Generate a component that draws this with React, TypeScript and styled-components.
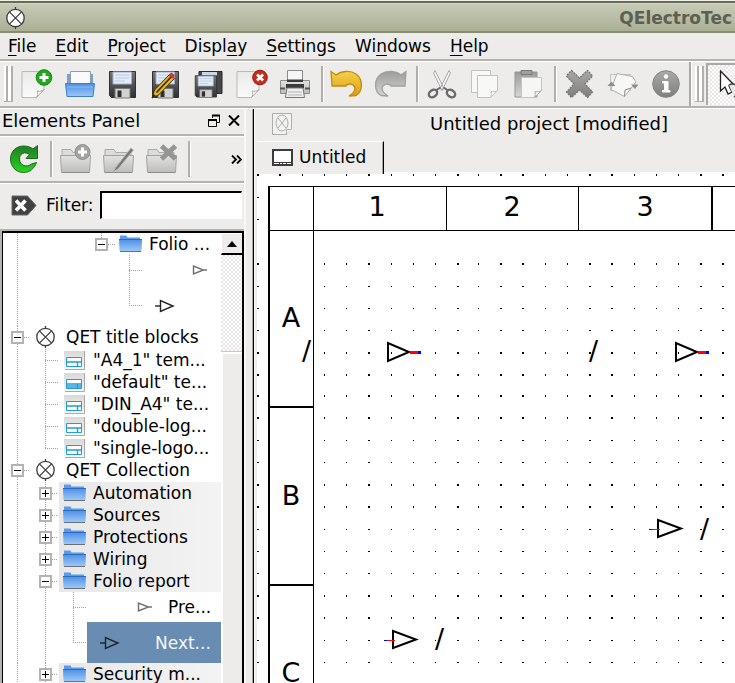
import React from "react";
import styled, { createGlobalStyle, css } from "styled-components";

const face = "#edecea";
const shade = "#b4b3b0";

const GlobalStyle = createGlobalStyle`
  * { box-sizing: border-box; }
  html, body, #root { height: 100%; }
  body {
    margin: 0;
    overflow: hidden;
    background: ${face};
    color: #000;
    font: 17px/22px "DejaVu Sans", sans-serif;
  }
  button {
    margin: 0;
    padding: 0;
    border: 0;
    background: none;
    color: inherit;
    font: inherit;
  }
  svg { display: block; flex: none; }
`;

const Window = styled.div`
  display: flex;
  flex-direction: column;
  height: 100vh;
  overflow: hidden;
`;

const TitleBar = styled.header`
  display: flex;
  flex: none;
  align-items: center;
  justify-content: space-between;
  height: 32px;
  margin-top: 1px;
  padding: 2px 3px 0 5px;
  border-top: 2px solid #666d53;
  border-bottom: 2px solid #858c72;
  box-shadow: inset 0 1px #d3d7c4;
  background: linear-gradient(#c8ccb8, #aab094);
`;

const WindowTitle = styled.h1`
  margin: 0;
  color: #5c6052;
  font-size: 17px;
  font-weight: bold;
  white-space: nowrap;
`;

const MenuBar = styled.nav`
  display: flex;
  flex: none;
  align-items: center;
  gap: 19px;
  height: 28px;
  padding: 0 8px;
  border-bottom: 2px solid ${shade};
`;

const MenuButton = styled.button`
  text-underline-offset: 3px;
  u { text-decoration-thickness: 1px; }
`;

const ToolBar = styled.div`
  display: flex;
  flex: none;
  height: 47px;
  padding-left: 4px;
  overflow: hidden;
  border-top: 1px solid #fff;
  border-bottom: 2px solid ${shade};
`;

const Handle = styled.span`
  flex: none;
  width: 9px;
  height: 36px;
  margin: 4px 2px 0 0;
  border: solid #b0afac;
  border-width: 0 2px 1px 0;
  background: linear-gradient(90deg, #fff 0 2px, #b0afac 2px 4px, #fff 4px 7px);
`;

const ToolButton = styled.button`
  display: flex;
  flex: none;
  align-items: center;
  justify-content: center;
  width: 43px;
  height: 44px;
`;

const ToggleButton = styled(ToolButton)`
  justify-content: flex-start;
  width: 44px;
  height: 42px;
  margin-top: 1px;
  padding-left: 11px;
  border: solid #a9a8a5;
  border-width: 2px 0 0 2px;
  background: repeating-conic-gradient(#fff 0 25%, #e9e8e6 0 50%) 0 0 / 4px 4px;
`;

const Separator = styled.span`
  flex: none;
  width: 9px;
  height: 36px;
  margin-top: 4px;
  background: linear-gradient(90deg, transparent 5px, #b0afac 5px 7px, #fff 7px 8px, transparent 8px);
`;

const BarEdge = styled.span`
  flex: none;
  width: 3px;
  margin: 0 3px 0 2px;
  background: linear-gradient(90deg, #a9a8a5 2px, #fff 2px);
`;

const Workspace = styled.main`
  display: flex;
  flex: 1;
  min-height: 0;
  border-top: 1px solid #fff;
`;

const Dock = styled.aside`
  display: flex;
  flex: none;
  flex-direction: column;
  width: 246px;
  border-right: 2px solid #f8f8f7;
`;

const DockTitle = styled.div`
  display: flex;
  flex: none;
  align-items: center;
  height: 27px;
  padding: 0 0 2px 2px;
  border-bottom: 2px solid ${shade};
  h2 {
    flex: 1;
    margin: 0;
    font-size: 18px;
    font-weight: normal;
  }
`;

const TitleButton = styled.button`
  display: flex;
  justify-content: center;
  width: 20px;
`;

const DockBar = styled.div`
  display: flex;
  flex: none;
  height: 47px;
  padding-left: 2px;
  border-top: 1px solid #fff;
  border-bottom: 2px solid ${shade};
`;

const MoreButton = styled(ToolButton)`
  width: 16px;
  margin: 0 0 0 auto;
`;

const FilterBar = styled.div`
  display: flex;
  flex: none;
  align-items: center;
  height: 48px;
  padding: 0 2px 3px 11px;
  border-top: 1px solid #fff;
  border-bottom: 2px solid ${shade};
  label { margin: 0 6px 0 9px; }
  input {
    flex: 1;
    min-width: 0;
    height: 28px;
    border: solid;
    border-width: 2px 1px 1px 2px;
    border-color: #000 #fff #fff #000;
    outline: 0;
    background: #fff;
    font: inherit;
  }
`;

const TreeFrame = styled.div`
  display: flex;
  flex: 1;
  min-height: 0;
  margin-left: 2px;
  border: solid #000;
  border-width: 2px 2px 0 1px;
  background: #fff;
  box-shadow: -2px 0 ${shade};
`;

const Tree = styled.div`
  flex: 1;
  min-width: 0;
  overflow: hidden;
  ul {
    margin: 0;
    padding: 1px 0 0;
    list-style: none;
  }
`;

const Row = styled.div<{ $height: number }>`
  display: flex;
  height: ${(p) => p.$height}px;
`;

const RowBody = styled.div<{ $look?: "category" | "selected"; $indent?: number }>`
  display: flex;
  flex: 1;
  align-items: center;
  min-width: 0;
  padding-left: ${(p) => p.$indent ?? 4}px;
  white-space: nowrap;
  overflow: hidden;
  ${(p) => p.$look === "category" && css`background: linear-gradient(90deg, #e8e8e8, #f3f3f3);`}
  ${(p) => p.$look === "selected" && css`background: #688cb2; color: #f4f7fb;`}
`;

const RowText = styled.span<{ $gap?: number }>`
  margin-left: ${(p) => p.$gap ?? 8}px;
`;

const dotsV = "repeating-linear-gradient(#a0a0a0 0 1px, transparent 1px 2px)";
const dotsH = "repeating-linear-gradient(90deg, #a0a0a0 0 1px, transparent 1px 2px)";

type Guide = "none" | "line" | "tee" | "end" | "node" | "start";
const guideArt: Record<Guide, string> = {
  none: "none",
  line: `${dotsV} 14px 0 / 1px 100% no-repeat`,
  node: `${dotsV} 14px 0 / 1px 100% no-repeat, ${dotsH} 21px 50% / 5px 1px no-repeat`,
  tee: `${dotsV} 14px 0 / 1px 100% no-repeat, ${dotsH} 14px 50% / 14px 1px no-repeat`,
  end: `${dotsV} 14px 0 / 1px 50% no-repeat, ${dotsH} 14px 50% / 14px 1px no-repeat`,
  start: `${dotsV} 14px 0 / 1px 50% no-repeat, ${dotsH} 21px 50% / 7px 1px no-repeat`,
};

const GuideCell = styled.span<{ $kind: Guide }>`
  display: flex;
  flex: none;
  align-items: center;
  justify-content: center;
  width: 28px;
  background: ${(p) => guideArt[p.$kind]};
`;

const Expander = styled.button`
  display: flex;
  align-items: center;
  justify-content: center;
  width: 13px;
  height: 13px;
  border: 2px solid #b2b2b2;
  background: #fff;
`;

const ScrollBar = styled.div`
  display: flex;
  flex: none;
  flex-direction: column;
  width: 21px;
  background: repeating-conic-gradient(#fff 0 25%, #e6e5e3 0 50%) 0 0 / 4px 4px;
`;

const ScrollUp = styled.button`
  display: flex;
  align-items: center;
  justify-content: center;
  height: 22px;
  border: solid;
  border-width: 1px 0 2px 1px;
  border-color: #fff #000 #000 #fff;
  background: ${face};
`;

const ScrollThumb = styled.div`
  flex: 1;
  margin-top: 97px;
  border: solid #fff;
  border-width: 2px 0 0 2px;
  background: ${face};
  box-shadow: 0 -1px #c9c8c5;
`;

const Splitter = styled.div`
  flex: none;
  width: 8px;
  border-right: 1px solid #000;
  box-shadow: inset -1px 0 #a8a7a4;
`;

const Editor = styled.section`
  display: flex;
  flex: 1;
  flex-direction: column;
  min-width: 0;
  padding-left: 2px;
  border-left: 1px solid #f8f8f7;
`;

const ProjectTitle = styled.div`
  display: flex;
  flex: none;
  align-items: center;
  height: 32px;
  padding: 0 15px 3px;
  overflow: hidden;
  white-space: nowrap;
  h2 {
    margin: 0 0 0 137px;
    font-size: 18px;
    font-weight: normal;
  }
`;

const Tabs = styled.div`
  display: flex;
  flex: none;
  height: 33px;
  &::after {
    content: "";
    flex: 1;
    border-bottom: 2px solid #fbfbfb;
  }
`;

const Tab = styled.button`
  display: flex;
  align-items: center;
  gap: 6px;
  width: 127px;
  padding: 0 0 2px 15px;
  border: solid;
  border-width: 1px 1px 0 0;
  border-color: #fff #000;
  box-shadow: inset -1px 0 #a8a7a4;
`;

const Canvas = styled.div`
  flex: 1;
  min-height: 0;
  overflow: hidden;
  background: #fff;
`;

/* ---------- icons ---------- */

const LampIcon = ({ bg = "none" }: { bg?: string }) => (
  <svg width="21" height="22" viewBox="0 0 21 22" fill={bg} stroke="#3c3c3c" strokeWidth="1.3">
    <circle cx="10.5" cy="11" r="8.7" />
    <path d="M4.4 4.9l12.2 12.2M16.6 4.9L4.4 17.1M10.5 0v2.5M10.5 19.5V22" />
  </svg>
);

const Sheet = ({ children }: { children?: React.ReactNode }) => (
  <svg width="32" height="30" viewBox="0 0 32 30">
    <path d="M1 2.5h22v18l-7.500 8H1z" fill="url(#paper)" stroke="#b9b9b8" />
    <path d="M15.500 28.500c1.500-2 1.500-4 .8-6.500 2.500.6 5 .3 6.700-1.500z" fill="#fff" stroke="#aaa" />
    {children}
  </svg>
);

const NewIcon = () => (
  <Sheet>
    <circle cx="23" cy="8.500" r="7.800" fill="#20a91c" stroke="#138a10" />
    <path d="M23 4v9M18.500 8.500h9" stroke="#fff" strokeWidth="3" />
  </Sheet>
);

const CloseDocIcon = () => (
  <Sheet>
    <circle cx="24" cy="8.500" r="7.300" fill="#c92a1b" stroke="#93180e" />
    <path d="M21 5.500l6 6M27 5.500l-6 6" stroke="#fff" strokeWidth="2.800" />
  </Sheet>
);

const OpenIcon = () => (
  <svg width="32" height="30" viewBox="0 0 32 30">
    <path d="M3 5h5v10H3zM24 5h5v10h-5z" fill="#6ea3e3" />
    <path d="M6.500 14V2.500h20V14" fill="#fafafa" stroke="#9a9a9a" />
    <path d="M1.500 14.500h29l-1.500 13h-26z" fill="url(#blue)" stroke="#3b7fd0" />
    <path d="M3 18h26" stroke="#8fbcf2" />
  </svg>
);

const Floppy = () => (
  <>
    <path d="M1.500 1.500h26v26h-24l-2-2z" fill="url(#floppy)" stroke="#303034" />
    <path d="M5 2h18.500v12H5z" fill="#e4edf7" stroke="#9fb0c4" />
    <path d="M7 5h14.500M7 8h14.500M7 11h10" stroke="#b5cbe4" />
    <path d="M7 18.500h15V28H7z" fill="#d2d2d2" stroke="#777" />
    <path d="M9.500 20.500h4V27h-4z" fill="#303034" />
  </>
);

const SaveIcon = () => (
  <svg width="29" height="29" viewBox="0 0 29 29"><Floppy /></svg>
);

const SaveAsIcon = () => (
  <svg width="29" height="29" viewBox="0 0 29 29">
    <Floppy />
    <path d="M1 28l2.500-8L18.500 4.500l5 4L7.500 25z" fill="#e9b51c" stroke="#3d3008" />
    <path d="M5.500 22.500L20.500 6.500" stroke="#2b2614" strokeWidth="1.600" />
    <path d="M17.500 5.500l2-2.500c1-.8 4.500 1.500 4 3.200l-2 2.600z" fill="#d8323a" />
    <path d="M1 28l1.500-4 2.500 2z" fill="#222" />
  </svg>
);

const SaveAllIcon = () => (
  <svg width="29" height="29" viewBox="0 0 29 29">
    <path d="M5 1.500h23v22H5z" fill="#47474a" stroke="#29292b" />
    <path d="M8 2h15v4H8z" fill="#cad7e5" />
    <g transform="translate(0 4.500) scale(.82)"><Floppy /></g>
  </svg>
);

const PrintIcon = () => (
  <svg width="32" height="30" viewBox="0 0 32 30">
    <path d="M8.500 1.500h15V13h-15z" fill="#f6f6f6" stroke="#8b8b8b" />
    <path d="M1.500 11.500h29v13h-29z" fill="url(#silver)" stroke="#8c8c8c" />
    <path d="M8 10.500h16V13H8zM7 15h18v4H7z" fill="#3b3b3b" />
    <path d="M1 19.500h5M26 19.500h5" stroke="#555" strokeWidth="2" />
    <path d="M8 19h16l1.500 9.500h-19z" fill="#eee" stroke="#777" />
    <path d="M9 23h14M9 26h14" stroke="#b5b5b5" />
  </svg>
);

const arrowPath =
  "M1 1.500l5 3.500C11 1 20 0 26 4c8 6 6.500 18 0 21.500l-7 .5c6-3.500 7.500-8 4.500-10.500-3-2.300-6.500-1-7.500 0V16H2z";

const UndoIcon = () => (
  <svg width="34" height="28" viewBox="0 0 34 28">
    <path d={arrowPath} fill="url(#gold)" stroke="#c08d12" strokeWidth="1.300" />
  </svg>
);

const RedoIcon = () => (
  <svg width="34" height="28" viewBox="0 0 34 28">
    <path d={arrowPath} transform="matrix(-1 0 0 1 34 0)" fill="url(#grey)" stroke="#a0a09f" strokeWidth="1.300" />
  </svg>
);

const CutIcon = () => (
  <svg width="30" height="30" viewBox="0 0 30 30" fill="none">
    <path d="M8 1.500l9 18-2 2L6.500 4zM22 1.500l-9 18 2 2L23.500 4z" fill="#f4f4f4" stroke="#aaa" />
    <ellipse cx="6" cy="24.500" rx="4.500" ry="3.300" transform="rotate(-35 6 24.500)" stroke="#6a6a6a" strokeWidth="2.400" />
    <ellipse cx="24" cy="24.500" rx="4.500" ry="3.300" transform="rotate(35 24 24.500)" stroke="#6a6a6a" strokeWidth="2.400" />
    <path d="M9.500 21l4-2.500M20.500 21l-4-2.500" stroke="#6a6a6a" strokeWidth="2" />
  </svg>
);

const CopyIcon = () => (
  <svg width="30" height="30" viewBox="0 0 30 30" fill="#f8f8f7" stroke="#c1c1c0">
    <path d="M1.500 1.500h19v22h-19z" />
    <path d="M7.500 6.500h20v15l-7 7h-13z" />
    <path d="M20.500 28.500c1-2 1-4 .5-6 2 .5 5 .5 6.500-1z" fill="#fff" />
  </svg>
);

const PasteIcon = () => (
  <svg width="30" height="30" viewBox="0 0 30 30">
    <path d="M2 3h22v25H2z" fill="url(#grey)" stroke="#969696" />
    <path d="M8 1.500h11v4H8z" fill="#9f9f9f" stroke="#7b7b7b" />
    <path d="M8.500 8.500h20v13l-7 7h-13z" fill="#f6f6f5" stroke="#c4c4c3" />
    <path d="M21.500 28.500c1-2 1-4 .5-6 2 .5 5 .5 6.500-1z" fill="#fff" stroke="#aaa" />
  </svg>
);

const DeleteIcon = () => (
  <svg width="29" height="30" viewBox="0 0 29 30">
    <path
      d="M6.500 1.500L14.500 9l8-7.500L27.500 7l-7.500 8 7.500 8-5 5.500-8-7.500-8 7.500-5-5.500L9 15 1.500 7z"
      fill="url(#dark)" stroke="#777" strokeWidth="1.400" strokeDasharray="2 1" strokeLinejoin="round"
    />
  </svg>
);

const RotateIcon = () => (
  <svg width="32" height="30" viewBox="0 0 32 30" fill="#f0f0ef" stroke="#c2c2c1">
    <path d="M3.500 5.500h20v16h-20z" />
    <path d="M10 4.500l15.500 3L29 13 17.500 27.500 4 20.500z" fill="#f7f7f6" stroke="#b0b0af" />
    <path d="M17.500 27.500l.5-6.500 6-2" fill="none" stroke="#8f8f8e" />
    <path d="M.5 17l4-4.500 4 4.500zM24 15.500h7.500l-3.500 4.500z" fill="#8d8d8d" stroke="none" />
  </svg>
);

const InfoIcon = () => (
  <svg width="30" height="30" viewBox="0 0 30 30">
    <circle cx="15" cy="15" r="13.300" fill="url(#dark)" stroke="#858585" />
    <circle cx="15" cy="7.500" r="2.200" fill="#fff" />
    <path d="M11.500 12.500h5.500v9h2V23h-7.500v-1.500h2V14h-2z" fill="#fff" stroke="#fff" />
  </svg>
);

const PointerIcon = () => (
  <svg width="30" height="30" viewBox="0 0 30 30">
    <path d="M1.500 1v20l4.500-4 3 7 4-2-3-6h6z" fill="#fff" stroke="#222" strokeWidth="1.300" />
    <path d="M10 15c3-2 8-1 9 3s-1 7-4 9" fill="#e8e8e8" stroke="#444" strokeWidth="1.500" />
  </svg>
);

const RefreshIcon = () => (
  <svg width="30" height="30" viewBox="0 0 30 30">
    <path
      d="M28.500 1.500v13H17l3.500-4C16 7 10.500 9.500 10.500 15c0 6.500 7.500 9 12 5l5-1.500c-2 6-7 10-13 10C7 28.500 1.500 22.500 1.500 15S7 2 14.500 2c4 0 7 1 9.500 3z"
      fill="url(#green)" stroke="#1b6a20"
    />
  </svg>
);

const GreyFolder = ({ children }: { children: React.ReactNode }) => (
  <svg width="33" height="30" viewBox="0 0 33 30">
    <path d="M3 12V5.500h9l2 3h15V12" fill="#dcdcdb" stroke="#aaaaa9" />
    <path d="M1.500 11.500h30l-1 17h-28z" fill="url(#silver)" stroke="#a2a2a1" />
    <path d="M3 28.500h27" stroke="#8b8b8a" />
    {children}
  </svg>
);

const AddFolderIcon = () => (
  <GreyFolder>
    <circle cx="23.500" cy="8" r="7.500" fill="#a3a3a2" stroke="#8e8e8d" />
    <path d="M23.500 3.500v9M19 8h9" stroke="#fff" strokeWidth="3" />
  </GreyFolder>
);
const EditFolderIcon = () => (
  <GreyFolder><path d="M11 28l3-5L29 4l2.500 2L16 25z" fill="#777" stroke="#b8b8b7" /></GreyFolder>
);
const DeleteFolderIcon = () => (
  <GreyFolder>
    <path d="M16.500 2l14 13M30.500 2l-14 13" stroke="#959594" strokeWidth="5" />
  </GreyFolder>
);

const ClearIcon = () => (
  <svg width="26" height="21" viewBox="0 0 26 21">
    <path d="M1 1h15.500L25 10.500 16.500 20H1z" fill="#414141" stroke="#666" />
    <path d="M5 5.500l9.500 10M14.500 5.500L5 15.500" stroke="#fff" strokeWidth="3.600" />
  </svg>
);

const FolderIcon = () => (
  <svg width="23" height="18" viewBox="0 0 23 18">
    <path d="M1 5V.5h6.500l1 2H21V5z" fill="#5b9bea" />
    <path d="M0 4h23l-.5 12H.5z" fill="url(#blue)" />
    <path d="M0 4.500h23" stroke="#2c6cc0" />
    <path d="M1 16.500h21" stroke="#6b6f76" />
  </svg>
);

const TemplateIcon = ({ filled }: { filled?: boolean }) => (
  <svg width="22" height="19" viewBox="0 0 22 19">
    <path d="M0 0h20v18H0z" fill="url(#page)" />
    <path d="M20.500 0v18.500H1" fill="none" stroke="#a9a9a9" />
    <path d="M2.500 6.500h15v9h-15z" fill="#fff" stroke="#249bd3" />
    {filled && <path d="M3 12h14v3H3z" fill="#5fb5de" />}
    <path d="M3 11h15M13.500 11v4" stroke="#249bd3" strokeWidth="1.400" />
  </svg>
);

const PortIcon = ({ faint, lead }: { faint?: boolean; lead?: boolean }) => (
  <svg width="20" height="14" viewBox="0 0 20 14" fill="none" stroke={faint ? "#6e6e6e" : "#222"} strokeWidth="1.400">
    {faint ? <path d="M3.500 3v8l10-4zM12 7h5" /> : <path d="M5.500 1.500v11L18 7z" />}
    {lead && <path d="M0 7h6" />}
  </svg>
);

const ProjectIcon = () => (
  <svg width="21" height="22" viewBox="0 0 21 22" fill="#f3f3f2" stroke="#aeaeac">
    <path d="M.5.500h19v15l-5 6H.5z" />
    <ellipse cx="10" cy="10" rx="6" ry="8" />
    <path d="M6 5l8 10M14 5L6 15M14.500 21.500v-5h5" />
  </svg>
);

const FolioIcon = () => (
  <svg width="21" height="17" viewBox="0 0 21 17" fill="none" stroke="#3c3c3c">
    <path d="M1 1h19v15H1z" fill="#fff" strokeWidth="2" />
    <path d="M1 13.500h19M7.500 13v3M10.500 13v3M14.500 13v3" />
  </svg>
);

const Paints = () => (
  <svg width="0" height="0" aria-hidden="true">
    <defs>
      {[
        ["paper", "#e9e9e8", "#fbfbfb"],
        ["page", "#d9d9d9", "#f6f6f6"],
        ["blue", "#4c8fe4", "#9cc6f7"],
        ["floppy", "#77777a", "#303034"],
        ["silver", "#e2e2e1", "#bcbcbb"],
        ["gold", "#f6d04a", "#dd9c16"],
        ["grey", "#9c9c9b", "#d6d6d5"],
        ["dark", "#a9a9a8", "#7f7f7e"],
        ["green", "#1f7a26", "#2bd51f"],
      ].map(([id, from, to]) => (
        <linearGradient key={id} id={id} x1="0" y1="0" x2="0" y2="1">
          <stop offset="0" stopColor={from} />
          <stop offset="1" stopColor={to} />
        </linearGradient>
      ))}
    </defs>
  </svg>
);

/* ---------- tree ---------- */

type RowProps = {
  guides: Guide[];
  sign?: "+" | "-";
  height?: number;
  look?: "category" | "selected";
  indent?: number;
  gap?: number;
  icon: React.ReactNode;
  text?: string;
};

const TreeRow = ({ guides, sign, height = 22, look, indent, gap, icon, text }: RowProps) => (
  <Row $height={height} role="treeitem" aria-selected={look === "selected"}>
    {guides.map((g, i) => (
      <GuideCell key={i} $kind={g}>
        {sign && i === guides.length - 1 && (
          <Expander aria-label={sign === "+" ? "Expand" : "Collapse"}>
            <svg width="7" height="7" viewBox="0 0 7 7" stroke="#000">
              <path d={sign === "+" ? "M0 3.500h7M3.500 0v7" : "M0 3.500h7"} />
            </svg>
          </Expander>
        )}
      </GuideCell>
    ))}
    <RowBody $look={look} $indent={indent}>
      {icon}
      {text && <RowText $gap={gap}>{text}</RowText>}
    </RowBody>
  </Row>
);

const templates = ['"A4_1" tem...', '"default" te...', '"DIN_A4" te...', '"double-log...', '"single-logo...'];
const categories = ["Automation", "Sources", "Protections", "Wiring", "Folio report"];

/* ---------- diagram ---------- */

const extend = (list: number[], limit: number) => {
  const out = [...list];
  while (out[out.length - 1] < limit) out.push(out[out.length - 1] + 22);
  return out;
};

const columns = extend(
  [0, 22, 45, 67, 89, 111, 134, 156, 178, 200, 221, 243, 265, 288, 310, 332, 354, 377, 399, 421, 443, 465], 2000);
const lines = extend(
  [0, 23, 45, 89, 112, 134, 156, 178, 200, 221, 243, 266, 288, 310, 332, 355, 377, 399, 421, 443, 466, 488], 1400);
const wideColumns = new Set([0, 22, 111, 200, 243, 265, 332, 354, 443, 465]);
const tallLines = new Set([0, 89, 178, 200, 221, 243, 310, 332, 421, 443]);

const dots = lines
  .flatMap((y, r) =>
    columns
      .filter((_, c) => r === 0 || c === 0 || (c > 2 && r > 2))
      .map((x) => {
        const w = wideColumns.has(x) ? 2 : 1;
        return `M${x} ${y}h${w}v${tallLines.has(y) ? 2 : 1}h-${w}z`;
      })
  )
  .join("");

const Outgoing = ({ x, y }: { x: number; y: number }) => (
  <g transform={`translate(${x} ${y})`}>
    <path d="M1 1v18l21-9z" fill="none" stroke="#000" strokeWidth="2" />
    <path d="M23 9h8v3h-8z" fill="#f00" />
    <path d="M31 9h3v3h-3z" fill="#00f" />
  </g>
);

const Incoming = ({ x, y }: { x: number; y: number }) => (
  <g transform={`translate(${x} ${y})`}>
    <path d="M9 1v17l23-8.500z" fill="none" stroke="#000" strokeWidth="2" />
    <path d="M3 10.500h8" stroke="#f00" />
    <path d="M0 10.500h3" stroke="#00f" />
  </g>
);

const label = { fontFamily: '"DejaVu Sans", sans-serif', fontSize: 27 };

const Diagram = () => (
  <svg width="2000" height="1400" role="img" aria-label="Folio diagram">
    <path d={dots} shapeRendering="crispEdges" />
    <g shapeRendering="crispEdges">
      <path d="M11 12h1989v1H13v1387h-2z" />
      <path d="M13 56h1987v1H13zM56 13h1v1387h-1zM189 13h1v43h-1zM321 13h1v43h-1zM454 13h2v43h-2z" />
      <path d="M13 232h43v2H13zM13 410h43v2H13zM13 588h43v2H13z" />
    </g>
    <g {...label} textAnchor="middle">
      <text x="120" y="42">1</text>
      <text x="255" y="42">2</text>
      <text x="388" y="42">3</text>
      <text x="34" y="153">A</text>
      <text x="34" y="331">B</text>
      <text x="34" y="508">C</text>
    </g>
    <g {...label}>
      <text x="45" y="186">/</text>
      <text x="332" y="186">/</text>
      <text x="443" y="364">/</text>
      <text x="178" y="474">/</text>
    </g>
    <Outgoing x={130} y={168} />
    <Outgoing x={418} y={168} />
    <Incoming x={392} y={345} />
    <Incoming x={127} y={456} />
  </svg>
);

/* ---------- page ---------- */

const menus = [["", "F", "ile"], ["", "E", "dit"], ["", "P", "roject"], ["Displ", "a", "y"], ["", "S", "ettings"], ["Wi", "n", "dows"], ["", "H", "elp"]];

const tools: [string, () => React.ReactElement][][] = [
  [["New", NewIcon], ["Open", OpenIcon], ["Save", SaveIcon], ["Save as", SaveAsIcon], ["Save all", SaveAllIcon], ["Close", CloseDocIcon], ["Print", PrintIcon]],
  [["Undo", UndoIcon], ["Redo", RedoIcon]],
  [["Cut", CutIcon], ["Copy", CopyIcon], ["Paste", PasteIcon]],
  [["Delete", DeleteIcon], ["Rotate", RotateIcon], ["Properties", InfoIcon]],
];

export default function App() {
  return (
    <Window>
      <GlobalStyle />
      <Paints />
      <TitleBar>
        <LampIcon bg="#fff" />
        <WindowTitle>QElectroTec</WindowTitle>
      </TitleBar>
      <MenuBar>
        {menus.map(([before, key, after]) => (
          <MenuButton key={before + key + after}>{before}<u>{key}</u>{after}</MenuButton>
        ))}
      </MenuBar>
      <ToolBar role="toolbar">
        <Handle />
        {tools.map((group, i) => (
          <React.Fragment key={i}>
            {i > 0 && <Separator />}
            {group.map(([name, Icon]) => (
              <ToolButton key={name} aria-label={name}><Icon /></ToolButton>
            ))}
          </React.Fragment>
        ))}
        <BarEdge />
        <Handle />
        <ToggleButton aria-label="Selection" aria-pressed="true"><PointerIcon /></ToggleButton>
      </ToolBar>
      <Workspace>
        <Dock>
          <DockTitle>
            <h2>Elements Panel</h2>
            <TitleButton aria-label="Float">
              <svg width="12" height="13" viewBox="0 0 12 13" fill="none" stroke="#000">
                <path d="M4.500 4V1M11.500 1v7.500H9" />
                <path d="M4 1.500h8" strokeWidth="2" />
                <path d="M.5 5v7.500h8V5" />
                <path d="M0 6h9" strokeWidth="2" />
              </svg>
            </TitleButton>
            <TitleButton aria-label="Close panel">
              <svg width="12" height="11" viewBox="0 0 12 11" stroke="#000" strokeWidth="2">
                <path d="M1 .5l10 10M11 .5l-10 10" />
              </svg>
            </TitleButton>
          </DockTitle>
          <DockBar role="toolbar">
            <ToolButton aria-label="Reload"><RefreshIcon /></ToolButton>
            <Separator />
            <ToolButton aria-label="New category"><AddFolderIcon /></ToolButton>
            <ToolButton aria-label="Edit category"><EditFolderIcon /></ToolButton>
            <ToolButton aria-label="Delete category"><DeleteFolderIcon /></ToolButton>
            <Separator />
            <MoreButton aria-label="More">
              <svg width="11" height="9" viewBox="0 0 11 9" fill="none" stroke="#000" strokeWidth="1.800">
                <path d="M1 .5l4 4-4 4M6 .5l4 4-4 4" />
              </svg>
            </MoreButton>
          </DockBar>
          <FilterBar>
            <ClearIcon />
            <label htmlFor="filter">Filter:</label>
            <input id="filter" type="text" />
          </FilterBar>
          <TreeFrame>
            <Tree role="tree">
              <TreeRow guides={["line", "none", "none", "start"]} sign="-" icon={<FolderIcon />} gap={7} text="Folio ..." />
              <TreeRow guides={["line", "none", "none", "none", "tee"]} height={30} indent={47} icon={<PortIcon faint />} />
              <TreeRow guides={["line", "none", "none", "none", "end"]} height={41} indent={12} icon={<PortIcon lead />} />
              <TreeRow guides={["node"]} sign="-" icon={<LampIcon />} gap={10} text="QET title blocks" />
              <ul>
                {templates.map((t, i) => (
                  <li key={t}>
                    <TreeRow guides={["line", i < templates.length - 1 ? "tee" : "end"]} indent={5} icon={<TemplateIcon filled={i === 1} />} gap={7} text={t} />
                  </li>
                ))}
              </ul>
              <TreeRow guides={["node"]} sign="-" icon={<LampIcon />} gap={10} text="QET Collection" />
              <ul>
                {categories.map((c) => (
                  <li key={c}>
                    <TreeRow guides={["line", "node"]} sign={c === "Folio report" ? "-" : "+"} look="category" icon={<FolderIcon />} gap={7} text={c} />
                  </li>
                ))}
              </ul>
              <TreeRow guides={["line", "line", "tee"]} height={30} indent={48} icon={<PortIcon faint />} gap={13} text="Pre..." />
              <TreeRow guides={["line", "line", "end"]} height={41} indent={13} look="selected" icon={<PortIcon lead />} gap={35} text="Next..." />
              <TreeRow guides={["line", "node"]} sign="+" look="category" icon={<FolderIcon />} gap={7} text="Security m..." />
            </Tree>
            <ScrollBar>
              <ScrollUp aria-label="Scroll up">
                <svg width="10" height="6" viewBox="0 0 10 6"><path d="M0 6l5-6 5 6z" /></svg>
              </ScrollUp>
              <ScrollThumb />
            </ScrollBar>
          </TreeFrame>
        </Dock>
        <Splitter />
        <Editor>
          <ProjectTitle>
            <ProjectIcon />
            <h2>Untitled project [modified]</h2>
          </ProjectTitle>
          <Tabs role="tablist">
            <Tab role="tab" aria-selected="true"><FolioIcon />Untitled</Tab>
          </Tabs>
          <Canvas><Diagram /></Canvas>
        </Editor>
      </Workspace>
    </Window>
  );
}
